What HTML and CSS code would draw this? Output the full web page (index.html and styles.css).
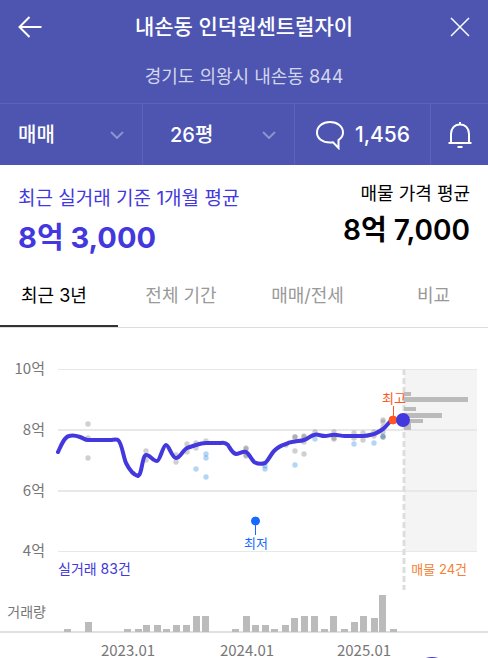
FILE: index.html
```
<!DOCTYPE html>
<html lang="ko">

<head>
    <meta charset="UTF-8">
    <meta name="viewport" content="width=device-width, initial-scale=1.0">
    <title>내손동 인덕원센트럴자이</title>
    <link rel="stylesheet" href="styles.css">
</head>

<body>
    <header class="header">
        <div class="title-bar">
            <button class="icon-button" aria-label="뒤로">
                <svg width="24" height="22" viewBox="0 0 24 22"><path d="M11.500 1 L1.500 11 L11.500 21 M1.500 11 H23.500" /></svg>
            </button>
            <h1>내손동 인덕원센트럴자이</h1>
            <button class="icon-button close" aria-label="닫기">
                <svg width="20" height="20" viewBox="0 0 20 20"><path d="M1 1 L19 19 M19 1 L1 19" /></svg>
            </button>
        </div>
        <p class="address">경기도 의왕시 내손동 844</p>

        <!-- Filters -->
        <div class="filter-bar">
            <div class="filter">
                <select class="filter-select" aria-label="거래 유형">
                    <option>매매</option>
                </select>
                <svg class="chevron" width="14" height="8" viewBox="0 0 14 8"><path d="M1 1 L7 7 L13 1" /></svg>
            </div>
            <div class="filter area">
                <select class="filter-select" aria-label="평형">
                    <option>26평</option>
                </select>
                <svg class="chevron" width="14" height="8" viewBox="0 0 14 8"><path d="M1 1 L7 7 L13 1" /></svg>
            </div>
            <button class="filter talk">
                <svg width="30" height="30" viewBox="0 0 30 30"><path d="M15 2 C7.500 2 2 6.500 2 12.500 C2 18.500 7.500 22.500 15 22.500 C16 22.500 17 22.500 18 22.300 L23.500 28 V20 C26.500 18 28 15.500 28 12.500 C28 6.500 22.500 2 15 2 Z" /></svg>
                1,456
            </button>
            <button class="filter bell" aria-label="알림">
                <svg width="24" height="28" viewBox="0 0 24 28"><path d="M12 1 V4 M3 22 V13 C3 7.500 6.500 3.500 12 3.500 C17.500 3.500 21 7.500 21 13 V22 M.5 22 H23.500 M9.500 26 H14.500" /></svg>
            </button>
        </div>
    </header>

    <main>
        <section class="prices">
            <div class="price deal">
                <p class="price-label">최근 실거래 기준 1개월 평균</p>
                <p class="price-value">8억 3,000</p>
            </div>
            <div class="price offer">
                <p class="price-label">매물 가격 평균</p>
                <p class="price-value">8억 7,000</p>
            </div>
        </section>

        <nav class="tabs">
            <button class="tab active">최근 3년</button>
            <button class="tab">전체 기간</button>
            <button class="tab">매매/전세</button>
            <button class="tab">비교</button>
        </nav>

        <svg class="chart" viewBox="0 328 488 330" role="img" aria-label="실거래가 차트">
            <rect class="offer-area" x="404" y="369" width="73" height="183" />

            <!-- Price axis -->
            <g class="grid">
                <rect x="58" y="369" width="419" height="1" />
                <rect x="58" y="429" width="419" height="2" />
                <rect x="58" y="490" width="419" height="2" />
                <rect x="58" y="551" width="419" height="1" />
            </g>
            <g class="axis-label end">
                <text x="45" y="374">10억</text>
                <text x="45" y="435">8억</text>
                <text x="45" y="496">6억</text>
                <text x="45" y="556">4억</text>
            </g>

            <!-- Offers by price -->
            <path class="split" d="M404 369 V590" />
            <g class="bars">
                <rect x="404" y="392" width="7" height="4" />
                <rect x="404" y="397" width="64" height="5" />
                <rect x="404" y="407" width="12" height="4" />
                <rect x="404" y="413" width="38" height="5" />
                <rect x="404" y="419" width="19" height="4" />
                <rect x="404" y="423" width="7" height="7" />
            </g>

            <!-- Single deals -->
            <g class="deals">
                <circle cx="88" cy="424" r="2.700" /><circle cx="88" cy="438" r="2.700" /><circle cx="88" cy="458" r="2.700" />
                <circle cx="146" cy="451" r="2.700" /><circle cx="146" cy="460" r="2.700" />
                <circle cx="176" cy="455" r="2.700" /><circle cx="176" cy="462" r="2.700" />
                <circle cx="187" cy="444" r="2.700" /><circle cx="187" cy="452" r="2.700" />
                <circle cx="196" cy="443" r="2.700" /><circle cx="196" cy="448" r="2.700" />
                <circle cx="206" cy="441" r="2.700" />
                <circle cx="246" cy="448" r="2.700" /><circle cx="246" cy="449" r="2.700" />
                <circle cx="246" cy="455" r="2.700" /><circle cx="246" cy="456" r="2.700" />
                <circle cx="286" cy="445" r="2.700" />
                <circle cx="295" cy="437" r="2.700" /><circle cx="295" cy="437" r="2.700" /><circle cx="295" cy="451" r="2.700" />
                <circle cx="304" cy="436" r="2.700" /><circle cx="304" cy="437" r="2.700" /><circle cx="304" cy="442" r="2.700" /><circle cx="304" cy="454" r="2.700" />
                <circle cx="315" cy="432" r="2.700" />
                <circle cx="334" cy="432" r="2.700" /><circle cx="334" cy="438" r="2.700" /><circle cx="334" cy="439" r="2.700" />
                <circle cx="354" cy="433" r="2.700" /><circle cx="354" cy="438" r="2.700" />
                <circle cx="363" cy="433" r="2.700" /><circle cx="363" cy="440" r="2.700" />
                <circle cx="374" cy="432" r="2.700" /><circle cx="374" cy="436" r="2.700" />
                <circle cx="383" cy="420" r="2.700" /><circle cx="383" cy="422" r="2.700" /><circle cx="383" cy="427" r="2.700" />
                <circle cx="383" cy="432" r="2.700" /><circle cx="383" cy="436" r="2.700" /><circle cx="383" cy="437" r="2.700" />
            </g>
            <g class="deals low">
                <circle cx="206" cy="454" r="2.700" /><circle cx="206" cy="458" r="2.700" /><circle cx="196" cy="469" r="2.700" />
                <circle cx="206" cy="477" r="2.700" /><circle cx="265" cy="466" r="2.700" /><circle cx="265" cy="469" r="2.700" />
                <circle cx="295" cy="465" r="2.700" /><circle cx="315" cy="439" r="2.700" /><circle cx="354" cy="444" r="2.700" />
                <circle cx="374" cy="443" r="2.700" /><circle cx="383" cy="437" r="2.700" />
            </g>

            <path class="average" d="M58 452 C61 446 64 437 69 436 C73 435 77 436 80 437 C83 438 85 440 88 440 H110 C113 440 116 439 118 440 C122 443 123 456 126 463 C129 469 134 475 138 476 C142 475 142 456 146 455 C149 454 153 461 157 461 C160 461 163 445 166 445 C169 445 172 458 176 458 C180 458 183 450 187 448 C190 447 193 446 196 445 C199 444 203 443 206 443 H221 C224 442 226 443 228 445 C230 448 232 453 236 454 C239 454 243 451 246 452 C249 453 252 461 255 462.500 C258 464 262 464 265 463 C268 461 271 454 274 451 C278 447 282 445 286 444 C289 442 292 442 295 441.500 C298 441 301 441 304 440 C308 439 311 435 315 434.700 C318 434 321 436 325 436 C328 436 331 434.700 334 434.700 C338 434.700 341 436 345 436 H363 C367 436 370 435 374 434 C377 433 380 431 383 429 C386 427 388 423 391 421 L393 420" />

            <path class="stem high" d="M393.500 406 V420" />
            <circle class="high" cx="393" cy="420" r="4" />
            <circle class="current" cx="403" cy="420" r="7" />
            <text class="mark high-text" x="394" y="403">최고</text>
            <path class="stem low-point" d="M255.500 521 V535" />
            <circle class="low-point" cx="255.500" cy="521" r="4" />
            <text class="mark low-text" x="256" y="548">최저</text>

            <text class="count deal-count" x="58" y="574">실거래 83건</text>
            <text class="count offer-count" x="467" y="574">매물 24건</text>

            <!-- Volume -->
            <text class="volume-label" x="46" y="617">거래량</text>
            <rect class="base" x="0" y="631" width="488" height="2" />
            <g class="bars">
                <rect x="64" y="629" width="7" height="3" />
                <rect x="85" y="622" width="7" height="10" />
                <rect x="124" y="629" width="7" height="3" />
                <rect x="135" y="629" width="7" height="3" />
                <rect x="143" y="625" width="7" height="7" />
                <rect x="154" y="625" width="7" height="7" />
                <rect x="163" y="629" width="7" height="3" />
                <rect x="173" y="625" width="7" height="7" />
                <rect x="183" y="625" width="7" height="7" />
                <rect x="193" y="616" width="7" height="16" />
                <rect x="202" y="616" width="7" height="16" />
                <rect x="232" y="629" width="7" height="3" />
                <rect x="243" y="616" width="7" height="16" />
                <rect x="252" y="625" width="7" height="7" />
                <rect x="262" y="625" width="7" height="7" />
                <rect x="271" y="629" width="7" height="3" />
                <rect x="282" y="625" width="7" height="7" />
                <rect x="291" y="618" width="7" height="14" />
                <rect x="301" y="616" width="7" height="16" />
                <rect x="311" y="616" width="7" height="16" />
                <rect x="321" y="629" width="7" height="3" />
                <rect x="330" y="616" width="7" height="16" />
                <rect x="341" y="629" width="7" height="3" />
                <rect x="351" y="622" width="7" height="10" />
                <rect x="360" y="616" width="7" height="16" />
                <rect x="371" y="618" width="7" height="14" />
                <rect x="379" y="595" width="7" height="37" />
                <rect x="390" y="629" width="7" height="3" />
            </g>
            <g class="axis-label middle">
                <text x="128" y="656">2023.01</text>
                <text x="247" y="656">2024.01</text>
                <text x="364" y="656">2025.01</text>
            </g>
            <circle class="knob" cx="432" cy="677" r="20" />
        </svg>
    </main>
</body>

</html>
```
FILE: styles.css
```
* {
    box-sizing: border-box;
}

body {
    margin: 0;
    font-family: Inter, "Noto Sans CJK KR", sans-serif;
    background-color: white;
    color: black;
}

h1,
p {
    margin: 0;
    font-weight: normal;
}

button,
select {
    margin: 0;
    padding: 0;
    border: none;
    background: none;
    color: inherit;
    font-family: inherit;
    cursor: pointer;
}

.header {
    background-color: #4d55b1;
    color: white;
}

.header svg {
    display: block;
    fill: none;
    stroke: white;
    stroke-width: 2;
}

.title-bar {
    display: flex;
    align-items: center;
    justify-content: space-between;
    height: 54px;
    padding: 0 18px;
}

.title-bar h1 {
    font-size: 21px;
    line-height: 32px;
    font-weight: 500;
}

.icon-button {
    display: flex;
    width: 24px;
}

.icon-button.close {
    justify-content: flex-end;
}

.header .close svg {
    stroke-width: 1.5;
}

.address {
    height: 49px;
    padding-top: 10px;
    font-size: 18px;
    line-height: 26px;
    text-align: center;
    color: #d3d5ec;
}

.filter-bar {
    display: grid;
    grid-template-columns: 143fr 152fr 136fr 57fr;
    height: 62px;
    border-top: 1px solid #5b62b7;
}

.filter {
    display: flex;
    align-items: center;
    padding: 0 18px;
    border-right: 1px solid #5b62b7;
    font-size: 20px;
    font-weight: 500;
}

.filter.area {
    padding-left: 27px;
}

.filter-select {
    flex: 1;
    min-width: 0;
    appearance: none;
    font-size: 20px;
    font-weight: 500;
}

.header .chevron {
    stroke: #8c92cd;
    pointer-events: none;
}

.filter.talk {
    justify-content: center;
    gap: 10px;
    padding: 0;
    font-size: 21px;
}

.filter.bell {
    justify-content: center;
    padding: 0;
    border-right: none;
}

.prices {
    display: flex;
    justify-content: space-between;
    height: 91px;
    padding: 16px 18px 0;
}

.price-label {
    font-size: 18px;
    line-height: 26px;
}

.price-value {
    font-size: 28px;
    line-height: 46px;
    font-weight: 600;
}

.deal {
    padding-top: 4px;
    color: #4338dd;
}

.deal .price-label {
    font-size: 19px;
    line-height: 28px;
}

.deal .price-value {
    font-size: 29px;
    line-height: 50px;
    font-weight: 700;
}

.offer {
    text-align: right;
}

.tabs {
    display: grid;
    grid-template-columns: 118fr 126fr 127fr 117fr;
    height: 72px;
    border-bottom: 1px solid #ddd;
}

.tab {
    padding-top: 6px;
    border-bottom: 2px solid transparent;
    font-size: 18px;
    color: #999;
}

.tab:first-child {
    padding-right: 10px;
}

.tab:last-child {
    padding-left: 8px;
}

.tab.active {
    border-bottom-color: #333;
    color: black;
}

.chart {
    display: block;
    width: 100%;
    overflow: hidden;
    font-family: "Noto Sans CJK KR", sans-serif;
}

.offer-area {
    fill: #f4f4f4;
}

.grid {
    fill: #e8e8e8;
}

.base {
    fill: #e0e0e0;
}

.bars {
    fill: #bbb;
}

.axis-label {
    font-size: 15px;
    fill: #777;
}

.end {
    text-anchor: end;
}

.middle {
    text-anchor: middle;
}

.split {
    stroke: #ddd;
    stroke-width: 3;
    stroke-dasharray: 6 3;
}

.deals {
    fill: #777;
    fill-opacity: 0.35;
}

.deals.low {
    fill: #2b86e6;
}

.average {
    fill: none;
    stroke: #4338dd;
    stroke-width: 4;
    stroke-linejoin: round;
    stroke-linecap: round;
}

.current {
    fill: #4338dd;
}

.high {
    fill: #ff5722;
    stroke: #ff5722;
}

.low-point {
    fill: #1769ff;
    stroke: #1769ff;
}

.stem {
    stroke-width: 1;
}

.mark {
    font-size: 13px;
    text-anchor: middle;
}

.high-text {
    fill: #ff5722;
}

.low-text {
    fill: #1769ff;
}

.count {
    font-family: Inter, "Noto Sans CJK KR", sans-serif;
}

.deal-count {
    font-size: 14px;
    fill: #4338dd;
}

.offer-count {
    font-size: 13px;
    fill: #f58033;
    text-anchor: end;
}

.volume-label {
    font-size: 14px;
    fill: #777;
    text-anchor: end;
}

.knob {
    fill: #4338dd;
}
```
